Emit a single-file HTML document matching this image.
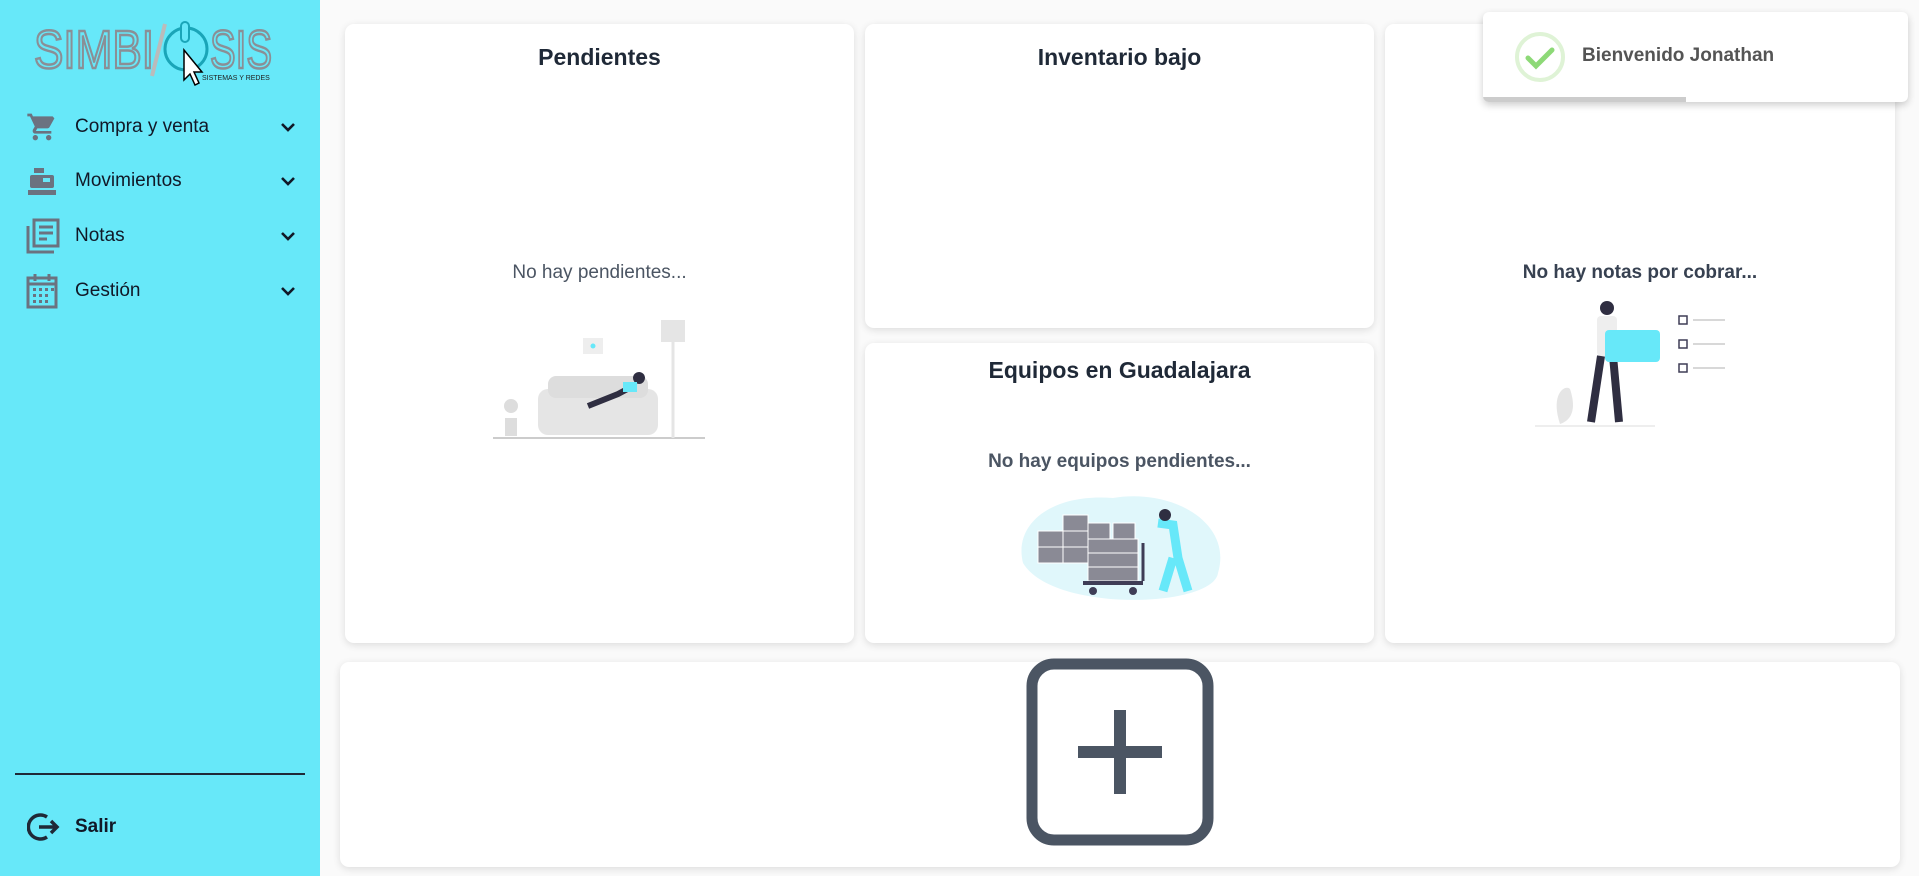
<!DOCTYPE html>
<html><head><meta charset="utf-8"><style>
*{margin:0;padding:0;box-sizing:border-box}
body{width:1919px;height:876px;overflow:hidden;background:#fafafa;font-family:"Liberation Sans",Roboto,sans-serif;position:relative}
.side{position:absolute;left:0;top:0;width:320px;height:876px;background:#67e8f9}
.item{position:absolute;left:0;width:320px;height:40px;display:flex;align-items:center;font-size:19px;color:#111827}
.item svg.ic{position:absolute;left:26px}
.item span{position:absolute;left:75px}
.item .chev{position:absolute;left:278px}
.card{position:absolute;background:#fff;border-radius:9px;box-shadow:0 2px 8px rgba(0,0,0,.12)}
.title{position:absolute;width:100%;text-align:center;font-weight:bold;font-size:23px;color:#1f2937}
.msg{position:absolute;width:100%;text-align:center;font-size:19px;color:#4b5563}
</style></head><body>
<div class="side">
 <svg width="320" height="100" style="position:absolute;left:0;top:0">
  <text x="34" y="68" font-family="Liberation Sans" font-size="54" fill="none" stroke="#8a8f96" stroke-width="2.5" textLength="120" lengthAdjust="spacingAndGlyphs">SIMBI</text>
  <line x1="165" y1="24" x2="152" y2="76" stroke="#bbb" stroke-width="4"/>
  <circle cx="186" cy="49" r="21" fill="none" stroke="#1aa5b8" stroke-width="3"/>
  <rect x="181" y="22" width="8" height="20" rx="4" fill="#67e8f9" stroke="#1aa5b8" stroke-width="2"/>
  <text x="210" y="68" font-family="Liberation Sans" font-size="54" fill="none" stroke="#8a8f96" stroke-width="2.5" textLength="62" lengthAdjust="spacingAndGlyphs">SIS</text>
  <text x="202" y="80" font-family="Liberation Sans" font-size="7" fill="#222">SISTEMAS Y REDES</text>
  <path d="M184 50 L184 80 L190 74 L195 85 L199 83 L194 72 L202 72 Z" fill="#fff" stroke="#000" stroke-width="1.5"/>
 </svg>
 <div class="item" style="top:107px"><svg class="ic" width="32" height="32" viewBox="0 0 24 24"><path fill="#6b7280" d="M7 18c-1.1 0-2 .9-2 2s.9 2 2 2 2-.9 2-2-.9-2-2-2zM1 2v2h2l3.6 7.6L5.2 14c-.1.3-.2.6-.2 1 0 1.1.9 2 2 2h12v-2H7.4l1.1-2h7.5c.8 0 1.4-.4 1.7-1l3.6-6.5L20 4H5.2l-.9-2H1zm16 16c-1.1 0-2 .9-2 2s.9 2 2 2 2-.9 2-2-.9-2-2-2z"/></svg><span>Compra y venta</span><svg class="chev" width="20" height="20" viewBox="0 0 20 20"><path d="M4 7l6 6 6-6" fill="none" stroke="#111827" stroke-width="2.6"/></svg></div>
 <div class="item" style="top:161px"><svg class="ic" width="32" height="32" viewBox="0 0 32 32"><rect x="8" y="3" width="10" height="5" fill="#6b7280"/><rect x="4" y="10" width="24" height="13" rx="2" fill="#6b7280"/><rect x="2" y="25" width="28" height="5" fill="#6b7280"/><rect x="17" y="13" width="7" height="4" fill="#67e8f9"/></svg><span>Movimientos</span><svg class="chev" width="20" height="20" viewBox="0 0 20 20"><path d="M4 7l6 6 6-6" fill="none" stroke="#111827" stroke-width="2.6"/></svg></div>
 <div class="item" style="top:216px"><svg class="ic" width="34" height="36" viewBox="0 0 34 36"><path d="M2 8v26h26" fill="none" stroke="#6b7280" stroke-width="3"/><rect x="8" y="2" width="24" height="26" fill="none" stroke="#6b7280" stroke-width="3"/><path d="M13 9h14M13 15h14M13 21h8" stroke="#6b7280" stroke-width="3"/></svg><span>Notas</span><svg class="chev" width="20" height="20" viewBox="0 0 20 20"><path d="M4 7l6 6 6-6" fill="none" stroke="#111827" stroke-width="2.6"/></svg></div>
 <div class="item" style="top:271px"><svg class="ic" width="32" height="36" viewBox="0 0 32 36"><rect x="2" y="5" width="28" height="29" fill="none" stroke="#6b7280" stroke-width="3"/><path d="M2 11h28M9 1v7M23 1v7" stroke="#6b7280" stroke-width="3"/><g fill="#6b7280"><rect x="7" y="15" width="3" height="3"/><rect x="13" y="15" width="3" height="3"/><rect x="19" y="15" width="3" height="3"/><rect x="25" y="15" width="3" height="3"/><rect x="7" y="21" width="3" height="3"/><rect x="13" y="21" width="3" height="3"/><rect x="19" y="21" width="3" height="3"/><rect x="7" y="27" width="3" height="3"/><rect x="13" y="27" width="3" height="3"/><rect x="19" y="27" width="3" height="3"/></g></svg><span>Gestión</span><svg class="chev" width="20" height="20" viewBox="0 0 20 20"><path d="M4 7l6 6 6-6" fill="none" stroke="#111827" stroke-width="2.6"/></svg></div>
 <div style="position:absolute;left:15px;top:773px;width:290px;height:1.5px;background:#1f2937"></div>
 <div class="item" style="top:807px;font-weight:bold"><svg class="ic" width="34" height="32" viewBox="0 0 34 32" style="left:27px"><path d="M20 6A12 12 0 1 0 20 26" fill="none" stroke="#1f2937" stroke-width="3.5"/><path d="M12 16h18M24 10l6 6-6 6" fill="none" stroke="#1f2937" stroke-width="3.5"/></svg><span>Salir</span></div>
</div>

<div class="card" style="left:345px;top:24px;width:509px;height:619px">
 <div class="title" style="top:20px">Pendientes</div>
 <div class="msg" style="top:238px">No hay pendientes...</div>
 <svg width="220" height="130" style="position:absolute;left:148px;top:290px" viewBox="0 0 220 130">
  <line x1="0" y1="124" x2="212" y2="124" stroke="#bbb" stroke-width="1.5"/>
  <rect x="45" y="75" width="120" height="46" rx="10" fill="#e5e5e5"/>
  <rect x="55" y="62" width="100" height="22" rx="8" fill="#ddd"/>
  <rect x="168" y="6" width="24" height="22" fill="#e5e5e5"/><line x1="180" y1="28" x2="180" y2="124" stroke="#e5e5e5" stroke-width="3"/>
  <rect x="90" y="24" width="20" height="16" fill="#eee"/><circle cx="100" cy="32" r="2.5" fill="#67e8f9"/>
  <path d="M95 92 L125 80 L140 72" stroke="#2f2e41" stroke-width="6" fill="none"/><circle cx="146" cy="64" r="6" fill="#2f2e41"/><rect x="130" y="68" width="14" height="10" fill="#67e8f9"/>
  <circle cx="18" cy="92" r="7" fill="#ddd"/><rect x="12" y="104" width="12" height="18" fill="#ddd"/>
 </svg>
</div>

<div class="card" style="left:865px;top:24px;width:509px;height:304px">
 <div class="title" style="top:20px">Inventario bajo</div>
</div>
<div class="card" style="left:865px;top:343px;width:509px;height:300px">
 <div class="title" style="top:14px">Equipos en Guadalajara</div>
 <div class="msg" style="top:108px;font-weight:bold">No hay equipos pendientes...</div>
 <svg width="220" height="130" style="position:absolute;left:148px;top:140px" viewBox="0 0 220 130">
  <path d="M10 80 C0 40 40 10 100 15 C160 5 220 40 205 90 C200 125 40 130 10 80Z" fill="#e0f7fb"/>
  <g fill="#8a8a95" stroke="#fff" stroke-width="1"><rect x="25" y="48" width="25" height="16"/><rect x="50" y="48" width="25" height="16"/><rect x="25" y="64" width="25" height="16"/><rect x="50" y="64" width="25" height="16"/><rect x="50" y="32" width="25" height="16"/><rect x="75" y="40" width="22" height="16"/><rect x="75" y="56" width="50" height="14"/><rect x="75" y="70" width="50" height="14"/><rect x="75" y="84" width="50" height="14"/><rect x="100" y="40" width="22" height="16"/></g>
  <rect x="70" y="98" width="60" height="4" fill="#3f3d56"/><circle cx="80" cy="108" r="4" fill="#3f3d56"/><circle cx="120" cy="108" r="4" fill="#3f3d56"/>
  <path d="M130 98 L130 60" stroke="#3f3d56" stroke-width="3"/>
  <path d="M145 40 L160 42 L165 75 L175 108 M160 75 L150 108" stroke="#67e8f9" stroke-width="9" fill="none"/><circle cx="152" cy="32" r="6" fill="#2f2e41"/>
 </svg>
</div>

<div class="card" style="left:1385px;top:24px;width:510px;height:619px">
 <div class="msg" style="top:238px;font-weight:bold;color:#374151">No hay notas por cobrar...</div>
 <svg width="200" height="140" style="position:absolute;left:150px;top:270px" viewBox="0 0 200 140">
  <line x1="0" y1="132" x2="120" y2="132" stroke="#ddd"/>
  <path d="M25 130 C15 100 30 90 35 95 C40 110 40 125 25 130Z" fill="#e5e5e5"/>
  <circle cx="72" cy="14" r="7" fill="#2f2e41"/><rect x="62" y="22" width="20" height="40" rx="4" fill="#eee"/>
  <path d="M66 62 L56 128 M78 62 L84 128" stroke="#2f2e41" stroke-width="8"/>
  <rect x="70" y="36" width="55" height="32" rx="4" fill="#67e8f9"/>
  <g fill="none" stroke="#3f3d56" stroke-width="1.5"><rect x="144" y="22" width="8" height="8"/><rect x="144" y="46" width="8" height="8"/><rect x="144" y="70" width="8" height="8"/></g>
  <g stroke="#ccc" stroke-width="1.5"><line x1="158" y1="26" x2="190" y2="26"/><line x1="158" y1="50" x2="190" y2="50"/><line x1="158" y1="74" x2="190" y2="74"/></g>
 </svg>
</div>

<div class="card" style="left:340px;top:662px;width:1560px;height:205px">
 <svg width="190" height="190" style="position:absolute;left:686px;top:-4px" viewBox="0 0 190 190">
  <rect x="6" y="6" width="176" height="176" rx="22" fill="#fff" stroke="#4b5563" stroke-width="11"/>
  <path d="M94 52v84M52 94h84" stroke="#4b5563" stroke-width="12"/>
 </svg>
</div>

<div class="card" style="left:1483px;top:12px;width:425px;height:90px;border-radius:6px;box-shadow:0 3px 8px rgba(0,0,0,.2);overflow:hidden">
 <svg width="52" height="52" style="position:absolute;left:31px;top:19px" viewBox="0 0 52 52"><circle cx="26" cy="26" r="23" fill="none" stroke="#dff3d6" stroke-width="4"/><path d="M14 27l8 8 16-16" fill="none" stroke="#8dd977" stroke-width="5" stroke-linecap="round"/></svg>
 <div style="position:absolute;left:99px;top:33px;font-size:19px;font-weight:bold;color:#545454">Bienvenido Jonathan</div>
 <div style="position:absolute;left:0;bottom:0;width:203px;height:5px;background:#ccc"></div>
</div>
</body></html>
